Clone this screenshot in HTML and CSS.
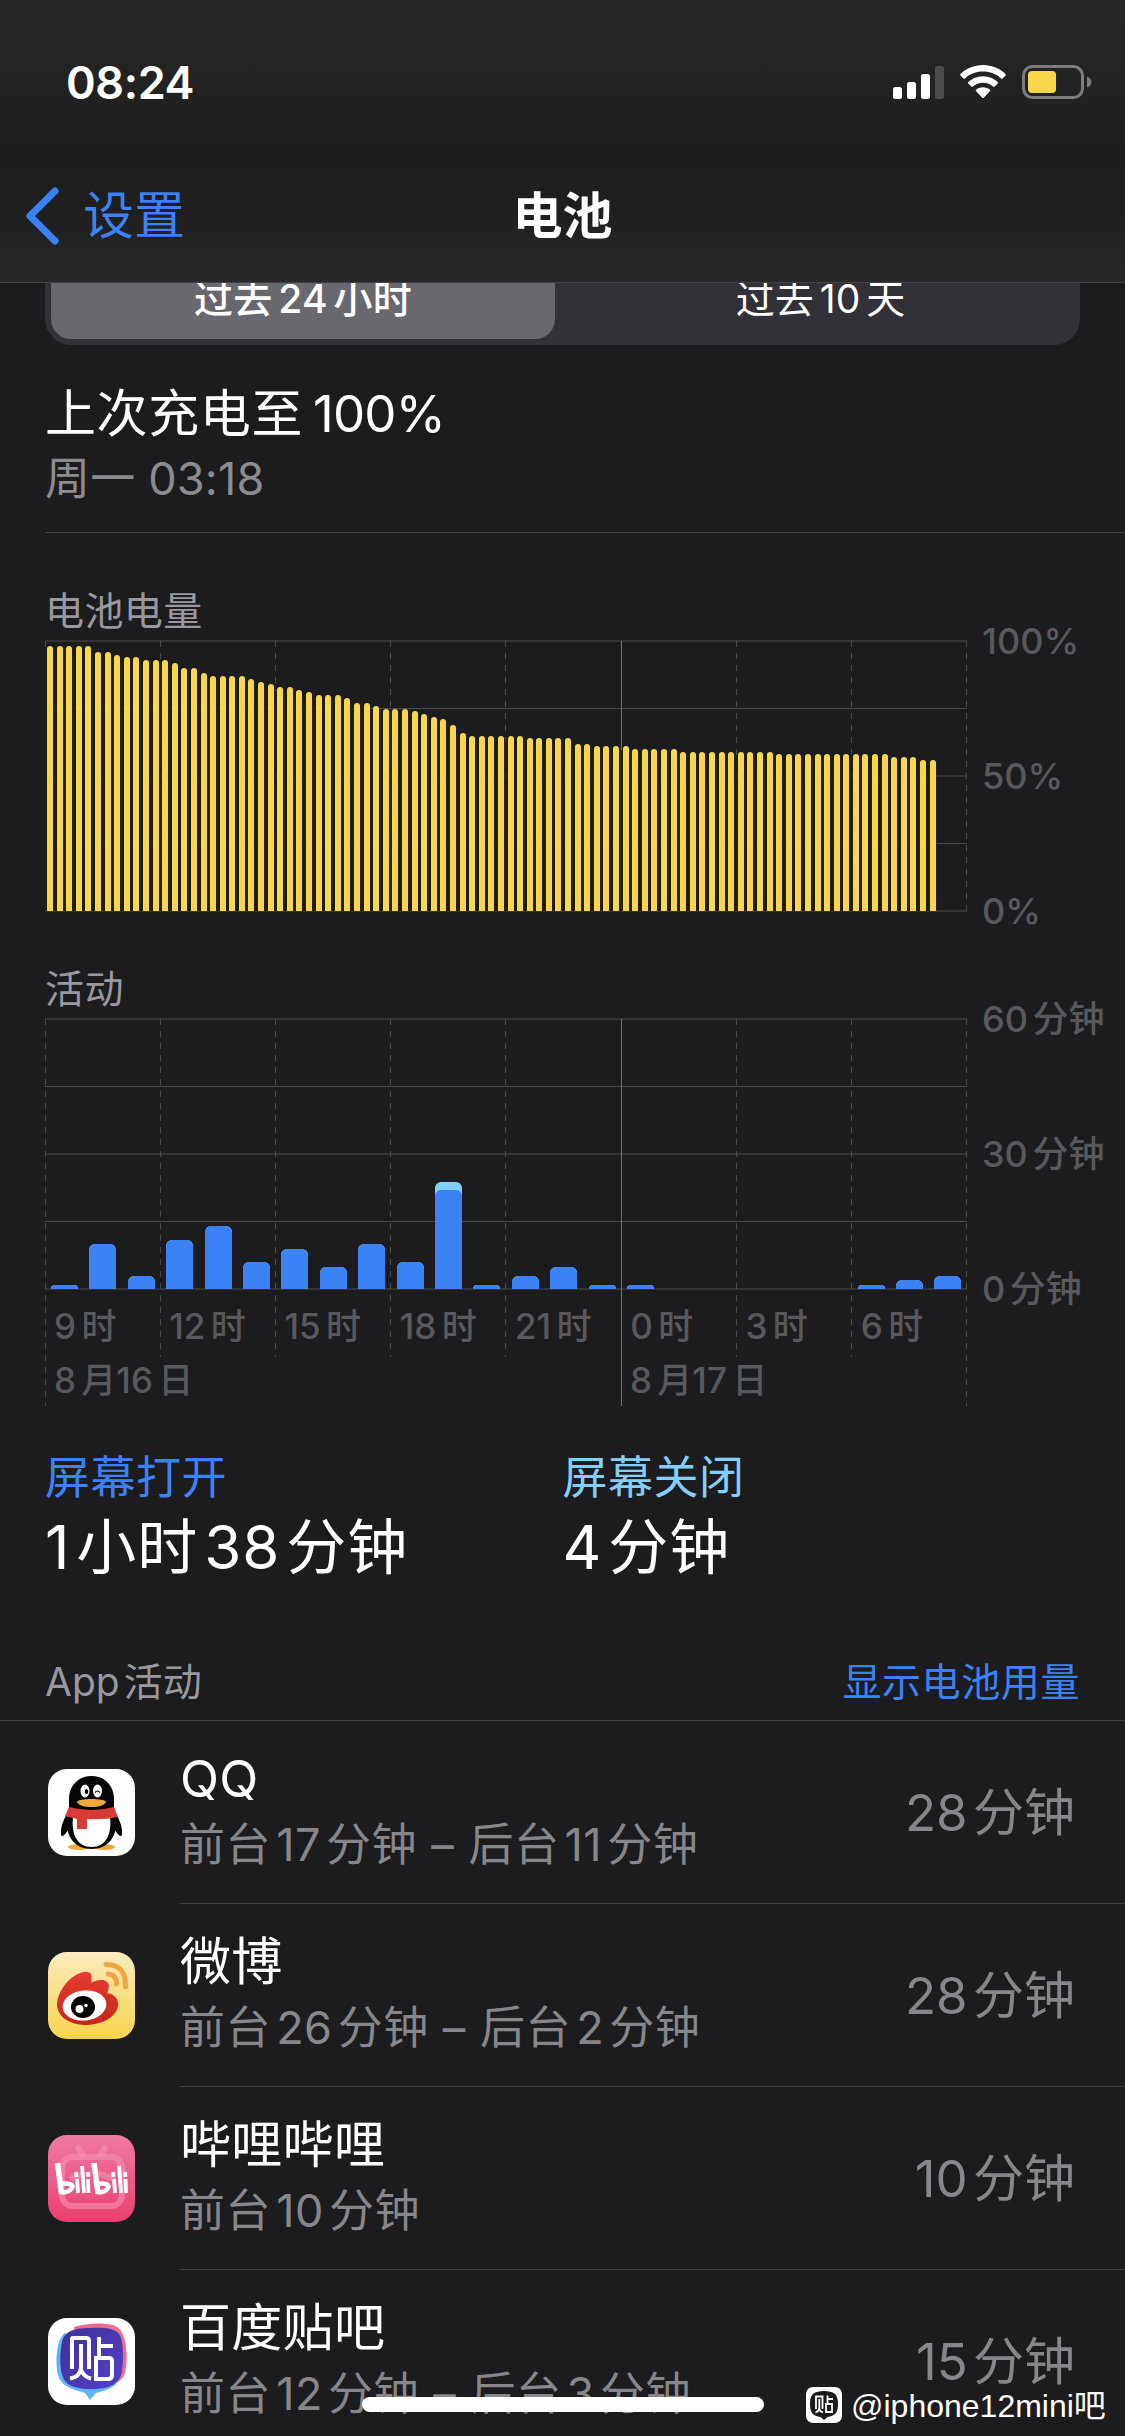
FILE: index.html
```html
<!DOCTYPE html>
<html lang="zh-CN">
  <head>
    <meta charset="UTF-8" />
    <meta name="viewport" content="width=device-width, initial-scale=1.0" />
    <title>电池</title>
    <link rel="stylesheet" href="styles.css">
  </head>
  <body>
    <header class="header">
      <div class="status">
        <span class="clock">08:24</span>
        <div class="status-icons">
          <svg class="signal" width="51" height="33" viewBox="0 0 51 33">
            <rect x="0" y="21" width="9" height="12" rx="2.5" fill="#fff" />
            <rect x="14" y="16" width="9" height="17" rx="2.5" fill="#fff" />
            <rect x="28" y="8" width="9" height="25" rx="2.5" fill="#fff" />
            <rect x="42" y="0" width="9" height="33" rx="2.5" fill="#4c4c4e" />
          </svg>
          <svg class="wifi" width="46" height="34" viewBox="0 0 46 34">
            <path d="M23 0C32 0 40 3.500 45.500 9Q46.200 9.800 45.500 10.500L42.500 13.500Q41.800 14.200 41 13.500C36 8.800 30 6.600 23 6.600S10 8.800 5 13.500Q4.200 14.200 3.500 13.500L.5 10.500Q-.2 9.800 .5 9C6 3.500 14 0 23 0Z" fill="#fff" />
            <path d="M23 11.200C29 11.200 34 13.500 37.800 17Q38.500 17.700 37.800 18.400L34.600 21.600Q33.900 22.200 33.100 21.600C30.400 19.200 27 17.800 23 17.800S15.600 19.200 12.900 21.600Q12.100 22.200 11.400 21.600L8.200 18.400Q7.500 17.700 8.200 17C12 13.500 17 11.200 23 11.200Z" fill="#fff" />
            <path d="M23 22.200C26 22.200 28.200 23.200 30 24.700Q30.700 25.400 30 26.100L23.800 32.700Q23 33.500 22.200 32.700L16 26.100Q15.300 25.400 16 24.700C17.800 23.200 20 22.200 23 22.200Z" fill="#fff" />
          </svg>
          <svg class="battery" width="70" height="34" viewBox="0 0 70 34">
            <rect x="1.500" y="1.500" width="59" height="31" rx="9" fill="none" stroke="#7c7c7e" stroke-width="3" />
            <rect x="6" y="6" width="28" height="22" rx="4" fill="#f8d74a" />
            <path d="M65 11.500Q69.500 13.500 69.500 17T65 22.500Z" fill="#7c7c7e" />
          </svg>
        </div>
      </div>
      <nav class="nav">
        <a class="back">
          <svg width="34" height="58" viewBox="0 0 34 58">
            <path d="M30 4L5 29L30 54" fill="none" stroke="#3b82f7" stroke-width="7" stroke-linecap="round" stroke-linejoin="round" />
          </svg>
          <span>设置</span>
        </a>
        <h1>电池</h1>
      </nav>
    </header>

    <main>
      <div class="tabs">
        <div class="tab active">过去 24 小时</div>
        <div class="tab">过去 10 天</div>
      </div>

      <div class="last-charge">
        <div class="charge-title">上次充电至 <span class="num">100%</span></div>
        <div class="charge-time">周一 03:18</div>
      </div>

      <section class="chart-block level-block">
        <h2>电池电量</h2>
        <div class="chart-row">
          <div class="plot">
            <svg class="grid" id="levelGrid" width="926" height="274"></svg>
            <div class="bars levels" id="levels"></div>
          </div>
          <div class="scale">
            <span>100%</span>
            <span>50%</span>
            <span>0%</span>
          </div>
        </div>
      </section>

      <section class="chart-block activity-block">
        <h2>活动</h2>
        <div class="chart-row">
          <div class="plot">
            <svg class="grid" id="activityGrid" width="926" height="390"></svg>
            <div class="bars activity" id="activity"></div>
          </div>
          <div class="scale">
            <span>60 分钟</span>
            <span>30 分钟</span>
            <span>0 分钟</span>
          </div>
        </div>
        <div class="hours">
          <span>9 时</span>
          <span>12 时</span>
          <span>15 时</span>
          <span>18 时</span>
          <span>21 时</span>
          <span>0 时</span>
          <span>3 时</span>
          <span>6 时</span>
        </div>
        <div class="days">
          <span class="day-first">8 月16 日</span>
          <span>8 月17 日</span>
        </div>
      </section>

      <div class="summary">
        <div class="sum">
          <div class="sum-label on">屏幕打开</div>
          <div class="sum-value">1 小时 38 分钟</div>
        </div>
        <div class="sum">
          <div class="sum-label off">屏幕关闭</div>
          <div class="sum-value">4 分钟</div>
        </div>
      </div>

      <div class="list-head">
        <span>App 活动</span>
        <a>显示电池用量</a>
      </div>

      <ul class="apps">
        <li class="app">
          <svg class="app-icon" viewBox="0 0 87 87">
            <rect width="87" height="87" rx="19" fill="#fff" />
            <ellipse cx="31" cy="78" rx="11" ry="3" fill="#f0a83a" />
            <ellipse cx="56" cy="78" rx="11" ry="3" fill="#f0a83a" />
            <path d="M19 45Q12 56 13 66Q15 70 22 58ZM68 45Q75 56 74 66Q72 70 65 58Z" fill="#060606" />
            <path d="M43.500 7C57 7 66 17 66 30V38L68 52C69 69 59 80 43.500 80S18 69 19 52L21 38V30C21 17 30 7 43.500 7Z" fill="#060606" />
            <path d="M25 48H62C64 65 58 78 43.500 78S23 65 25 48Z" fill="#fff" />
            <path d="M21 38Q43 44 66 38L70 48Q56 51 39 50V60H29V50L17 47Z" fill="#d93a36" />
            <ellipse cx="37" cy="22" rx="4.500" ry="6.500" fill="#fff" />
            <ellipse cx="49.500" cy="22" rx="4.500" ry="6.500" fill="#fff" />
            <ellipse cx="38.500" cy="22.500" rx="1.700" ry="2.600" fill="#000" />
            <path d="M47 23.500Q49.500 20.500 52 23.500" fill="none" stroke="#000" stroke-width="1.200" />
            <path d="M29 33C29 29 58 29 58 33C56 37 50 38 43.500 38S31 37 29 33Z" fill="#f0aa3c" />
          </svg>
          <div class="app-body">
            <div class="app-text">
              <div class="app-name">QQ</div>
              <div class="app-detail">前台 17 分钟 <span class="dash">–</span> 后台 11 分钟</div>
            </div>
            <div class="app-time">28 分钟</div>
          </div>
        </li>
        <li class="app">
          <svg class="app-icon" viewBox="0 0 87 87">
            <defs>
              <linearGradient id="weiboBg" x1="0" y1="0" x2="0" y2="1">
                <stop offset="0" stop-color="#fbebc0" />
                <stop offset="1" stop-color="#f8d44c" />
              </linearGradient>
              <linearGradient id="weiboRed" x1="0" y1="0" x2="0" y2="1">
                <stop offset="0" stop-color="#e63a30" />
                <stop offset="1" stop-color="#c5281c" />
              </linearGradient>
            </defs>
            <rect width="87" height="87" rx="19" fill="url(#weiboBg)" />
            <path d="M36 20C43 19 45 24 43 31C50 27 60 26 61 34Q61 38 59 41C67 42 71 48 70 54C68 66 53 73 36 73C20 72 9 64 9 52C10 38 23 22 36 20Z" fill="url(#weiboRed)" />
            <ellipse cx="36.500" cy="53.500" rx="22" ry="15" transform="rotate(-6 36.500 53.500)" fill="#fff" />
            <ellipse cx="35" cy="55" rx="12" ry="11" fill="#000" />
            <circle cx="31.500" cy="57" r="4" fill="#fff" />
            <circle cx="38" cy="53.500" r="1.700" fill="#fff" />
            <path d="M60 22Q69 23 68.500 32M58 12.500Q78 12 77.500 35" fill="none" stroke="#f2a642" stroke-width="5" stroke-linecap="round" />
          </svg>
          <div class="app-body">
            <div class="app-text">
              <div class="app-name">微博</div>
              <div class="app-detail">前台 26 分钟 <span class="dash">–</span> 后台 2 分钟</div>
            </div>
            <div class="app-time">28 分钟</div>
          </div>
        </li>
        <li class="app">
          <svg class="app-icon" viewBox="0 0 87 87">
            <defs>
              <linearGradient id="biliBg" x1="0" y1="0" x2="0" y2="1">
                <stop offset="0" stop-color="#ee7ba2" />
                <stop offset="1" stop-color="#ea3f70" />
              </linearGradient>
            </defs>
            <rect width="87" height="87" rx="19" fill="url(#biliBg)" />
            <g fill="none" stroke="#f493b2" stroke-opacity=".6" stroke-width="6" stroke-linecap="round">
              <rect x="14" y="22" width="60" height="49" rx="11" />
              <path d="M30 13L35 20M57 13L52 20" />
              <path d="M24 43L36 39M52 39L64 43" />
            </g>
            <g fill="none" stroke="#fff" stroke-linecap="butt">
              <path d="M9.500 28L13.500 59M46 28L50 59" stroke-width="5.500" />
              <path d="M13 48.500Q27 48 24 53Q21 57.500 13 57.500M49.500 48.500Q63 48 60 53Q57 57.500 49.500 57.500" stroke-width="4.500" />
              <path d="M29 44L30 58M34 31L36 58M40 44L40.500 58M66 44L67 58M71 31L73 58M77.500 44L78 58" stroke-width="3.800" />
              <path d="M28 37L28.600 42M40 37L40.500 42M65 37L65.600 42M77 37L77.500 42" stroke-width="3.800" />
            </g>
          </svg>
          <div class="app-body">
            <div class="app-text">
              <div class="app-name">哔哩哔哩</div>
              <div class="app-detail">前台 10 分钟</div>
            </div>
            <div class="app-time">10 分钟</div>
          </div>
        </li>
        <li class="app">
          <svg class="app-icon" viewBox="0 0 87 87">
            <defs>
              <linearGradient id="tiebaBg" x1="0" y1="0" x2="1" y2="1">
                <stop offset="0" stop-color="#3d3194" />
                <stop offset="1" stop-color="#5540cc" />
              </linearGradient>
            </defs>
            <rect width="87" height="87" rx="19" fill="#fff" />
            <path d="M26 9C40 5 60 4 69 9C80 16 80 45 77 55Q75 62 66 66L30 40Z" fill="#ea6b8c" />
            <path d="M17 15C7 22 7 50 11 60C15 69 27 72 37 75L42 82L48 75Q62 72 68 66L50 30Z" fill="#60b3fa" />
            <path d="M44 10C65 9 73 13 74 25Q76 39 74 53C72 65 64 71 43 71C22 71 15 65 13 52Q11 38 14 24C17 12 28 10 44 10Z" fill="url(#tiebaBg)" />
            <path d="M24 51V21Q24 20 25 20H38Q41 20 41 23V51M33 26V50Q32 59 22 60.500M33 52Q36 59 43 60.500M51 19V40M51 28H65M48 40H61Q64 40 64 43V57Q64 61 60 61H48Z" fill="none" stroke="#fff" stroke-width="4" />
          </svg>
          <div class="app-body">
            <div class="app-text">
              <div class="app-name">百度贴吧</div>
              <div class="app-detail">前台 12 分钟 <span class="dash">–</span> 后台 3 分钟</div>
            </div>
            <div class="app-time">15 分钟</div>
          </div>
        </li>
      </ul>
    </main>

    <div class="home-bar"></div>
    <div class="watermark">
      <svg width="36" height="36" viewBox="0 0 36 36">
        <rect width="36" height="36" rx="7" fill="#fff" />
        <path d="M18 4C28 4 32 7 32 17C32 26 29 29 21.500 30L18 33L14.500 30C7 29 4 26 4 17C4 7 8 4 18 4Z" fill="#1c1c1e" />
        <path d="M10 22V9.500H16.500V22M13.300 12V21Q13 24.500 9.500 25.500M13.300 22Q14 24.500 17 25.500M21.500 8.500V17M21.500 12H27M20 17H26V25H20Z" fill="none" stroke="#fff" stroke-width="1.800" />
      </svg>
      <span>@iphone12mini吧</span>
    </div>

    <script>
      // [level in %, number of 15 minute bars]
      const levels = [
        [98, 5], [96, 2], [95, 1], [94, 2], [93, 3], [92, 1], [90, 2], [88, 1],
        [87, 4], [86, 1], [85, 1], [84, 1], [83, 2], [82, 1], [81, 1], [80, 3],
        [79, 1], [77, 2], [76, 1], [75, 3], [74, 1], [73, 1], [72, 1], [71, 1],
        [69, 1], [66, 1], [65, 6], [64, 5], [62, 2], [61, 4], [60, 5], [59, 10],
        [58, 12], [57, 3], [56, 2]
      ];
      // [screen on, screen off] minutes for each hour
      const minutes = [
        [1, 0], [10, 0], [3, 0], [11, 0], [14, 0], [6, 0], [9, 0], [5, 0],
        [10, 0], [6, 0], [22, 1.8], [1, 0], [3, 0], [5, 0], [1, 0], [1, 0],
        [0, 0], [0, 0], [0, 0], [0, 0], [0, 0], [1, 0], [2, 0], [3, 0]
      ];

      const levelBox = document.getElementById("levels");
      levels.forEach(([value, count]) => {
        for (let i = 0; i < count; i++) {
          const slot = document.createElement("div");
          slot.className = "slot";
          slot.style.height = value + "%";
          slot.innerHTML = '<div class="bar"></div>';
          levelBox.appendChild(slot);
        }
      });

      const activityBox = document.getElementById("activity");
      minutes.forEach(([on, off]) => {
        const slot = document.createElement("div");
        slot.className = "slot";
        slot.style.height = ((on + off) / 60) * 100 + "%";
        if (on) {
          const h = (on / (on + off)) * 100;
          slot.innerHTML = '<div class="bar"><div class="bar-on" style="height: ' + h + '%"></div></div>';
        }
        activityBox.appendChild(slot);
      });

      function grid(id, inner, outer) {
        let out = "";
        for (let i = 0; i <= 4; i++) {
          const half = i % 2;
          out += '<rect x="0" y="' + (67.5 * i - (half ? 0.5 : 1)) + '" width="922" height="' + (half ? 1 : 2) +
            '" fill="' + (half ? "#4a4a4d" : "#343437") + '" />';
        }
        for (let i = 0; i <= 8; i++) {
          const x = Math.floor(115.2 * i) + 0.5;
          const solid = i === 5;
          const end = solid || i === 0 || i === 8 ? outer : inner;
          out += '<path d="M' + x + " 0V" + end + '" stroke="' + (solid ? "#737377" : "#4a4a4d") +
            '"' + (solid ? "" : ' stroke-dasharray="6 6"') + " />";
        }
        document.getElementById(id).innerHTML = out;
      }
      grid("levelGrid", 270, 270);
      grid("activityGrid", 338, 387);
    </script>
  </body>
</html>
```
FILE: styles.css
```css
* {
  box-sizing: border-box;
}
body {
  margin: 0;
  width: 1125px;
  height: 2436px;
  overflow: hidden;
  position: relative;
  background-color: #1c1c1e;
  color: white;
  font-family: Inter, "Noto Sans CJK SC", sans-serif;
}
h1,
h2,
ul {
  margin: 0;
  padding: 0;
  font-weight: 400;
}

/* header */
.header {
  position: relative;
  z-index: 2;
  height: 283px;
  background: linear-gradient(#272728 0, #222223 90px, #1d1d1e 150px, #1f1f20 210px, #28282a 282px);
  border-bottom: 1px solid #434346;
}
.status {
  display: flex;
  justify-content: space-between;
  align-items: center;
  height: 164px;
  padding: 0 33px 0 66px;
}
.clock {
  font-size: 45px;
  font-weight: 600;
  letter-spacing: -0.4px;
}
.status-icons {
  display: flex;
  align-items: center;
  gap: 16px;
}
.nav {
  display: grid;
  grid-template-columns: 1fr 200px 1fr;
  align-items: center;
  height: 104px;
  font-size: 51px;
}
.nav h1 {
  padding-bottom: 8px;
  font-size: 50px;
  font-weight: 600;
  text-align: center;
}
.back {
  display: flex;
  align-items: center;
  gap: 24px;
  padding-left: 25px;
  color: #3b82f7;
}
.back span {
  padding-bottom: 8px;
}

/* tabs */
.tabs {
  display: flex;
  height: 96px;
  margin: -34px 45px 0;
  padding: 6px;
  border-radius: 26px;
  background-color: #323137;
}
.tab {
  flex: 1;
  display: flex;
  align-items: center;
  justify-content: center;
  padding: 0 0 3px 12px;
  border-radius: 20px;
  font-size: 39px;
  font-weight: 400;
  word-spacing: -5px;
}
.tab.active {
  flex: 0 0 504px;
  padding-left: 0;
  background-color: #69686e;
  font-weight: 500;
  letter-spacing: 0.3px;
}

.last-charge {
  height: 188px;
  margin-left: 45px;
  padding-top: 37px;
  border-bottom: 1px solid #414144;
}
.charge-title {
  font-size: 51px;
  line-height: 64px;
  letter-spacing: 0.6px;
  word-spacing: -5px;
}
.num {
  letter-spacing: -0.8px;
}
.charge-time {
  font-size: 45px;
  line-height: 66px;
  letter-spacing: 0.2px;
  color: #8b8b90;
}

/* charts */
.chart-block {
  padding-left: 45px;
}
.chart-block h2 {
  font-size: 39px;
  line-height: 60px;
  letter-spacing: 0.4px;
  color: #98989e;
}
.level-block {
  padding-top: 48px;
}
.activity-block {
  padding-top: 48px;
}
.chart-row {
  display: flex;
  height: 270px;
}
.plot {
  position: relative;
  width: 922px;
}
.grid {
  position: absolute;
  top: 0;
  left: 0;
  overflow: visible;
}
.bars {
  position: relative;
  display: flex;
  align-items: flex-end;
  height: 270px;
}
.levels .slot {
  width: 9.604px;
  padding-left: 2px;
  background: linear-gradient(#201d0acc, #201d0acc) no-repeat 0 4px;
}
.levels .bar {
  width: 6px;
  height: 100%;
  border-radius: 3px 3px 0 0;
  background-color: #f8d74e;
}
.activity .slot {
  width: 38.417px;
  padding-left: 6px;
}
.activity .bar {
  display: flex;
  align-items: flex-end;
  width: 27px;
  height: 100%;
  border-radius: 6px 6px 0 0;
  background-color: #82cffb;
  overflow: hidden;
}
.bar-on {
  width: 100%;
  border-radius: 6px 6px 0 0;
  background-color: #3b82f7;
}
.scale {
  display: flex;
  flex-direction: column;
  justify-content: space-between;
  margin: -25px 0 -25px 15px;
  font-size: 36px;
  font-weight: 500;
  line-height: 50px;
  color: #59595d;
  white-space: nowrap;
  word-spacing: -5px;
}
.hours,
.days {
  display: flex;
  font-size: 35px;
  font-weight: 500;
  line-height: 54px;
  color: #59595d;
  word-spacing: -4px;
}
.hours {
  padding-top: 10px;
}
.hours span {
  width: 115.25px;
  padding-left: 9px;
  white-space: nowrap;
}
.days span {
  padding-left: 9px;
}
.day-first {
  width: 576px;
}

.summary {
  display: flex;
  padding: 41px 45px 0;
}
.sum {
  width: 518px;
}
.sum-label {
  font-size: 45px;
  line-height: 60px;
  letter-spacing: 0.5px;
}
.on {
  color: #3b82f7;
}
.off {
  color: #82cffb;
}
.sum-value {
  font-size: 60px;
  line-height: 78px;
  letter-spacing: 1px;
  word-spacing: -12px;
}

/* app list */
.list-head {
  display: flex;
  justify-content: space-between;
  align-items: flex-end;
  height: 135px;
  padding: 0 45px 8px;
  border-bottom: 1px solid #414144;
  font-size: 39px;
  line-height: 60px;
  color: #98989e;
  word-spacing: -7px;
}
.list-head a {
  color: #3b82f7;
  letter-spacing: 0.6px;
}
.apps {
  list-style: none;
}
.app {
  display: flex;
  align-items: center;
  height: 183px;
  padding-left: 48px;
}
.app-icon {
  width: 87px;
  height: 87px;
}
.app-body {
  flex: 1;
  display: flex;
  justify-content: space-between;
  align-items: center;
  height: 183px;
  margin-left: 45px;
  padding-right: 50px;
  border-bottom: 1px solid #414144;
}
.app-name {
  font-size: 51px;
  line-height: 66px;
  letter-spacing: 0.3px;
}
.app-detail {
  font-size: 45px;
  line-height: 66px;
  color: #87868b;
  letter-spacing: 0.5px;
  word-spacing: -8px;
}
.dash {
  margin: 0 9px;
}
.app-time {
  padding-bottom: 6px;
  font-size: 51px;
  color: #87868b;
  word-spacing: -9px;
}

.home-bar {
  position: absolute;
  left: 362px;
  top: 2397px;
  width: 402px;
  height: 15px;
  border-radius: 8px;
  background-color: white;
}
.watermark {
  position: absolute;
  left: 806px;
  top: 2387px;
  display: flex;
  align-items: center;
  gap: 9px;
  height: 36px;
  font-family: "Liberation Sans", "Noto Sans CJK SC", sans-serif;
  font-size: 32px;
}
.watermark span {
  padding-bottom: 5px;
}
```
